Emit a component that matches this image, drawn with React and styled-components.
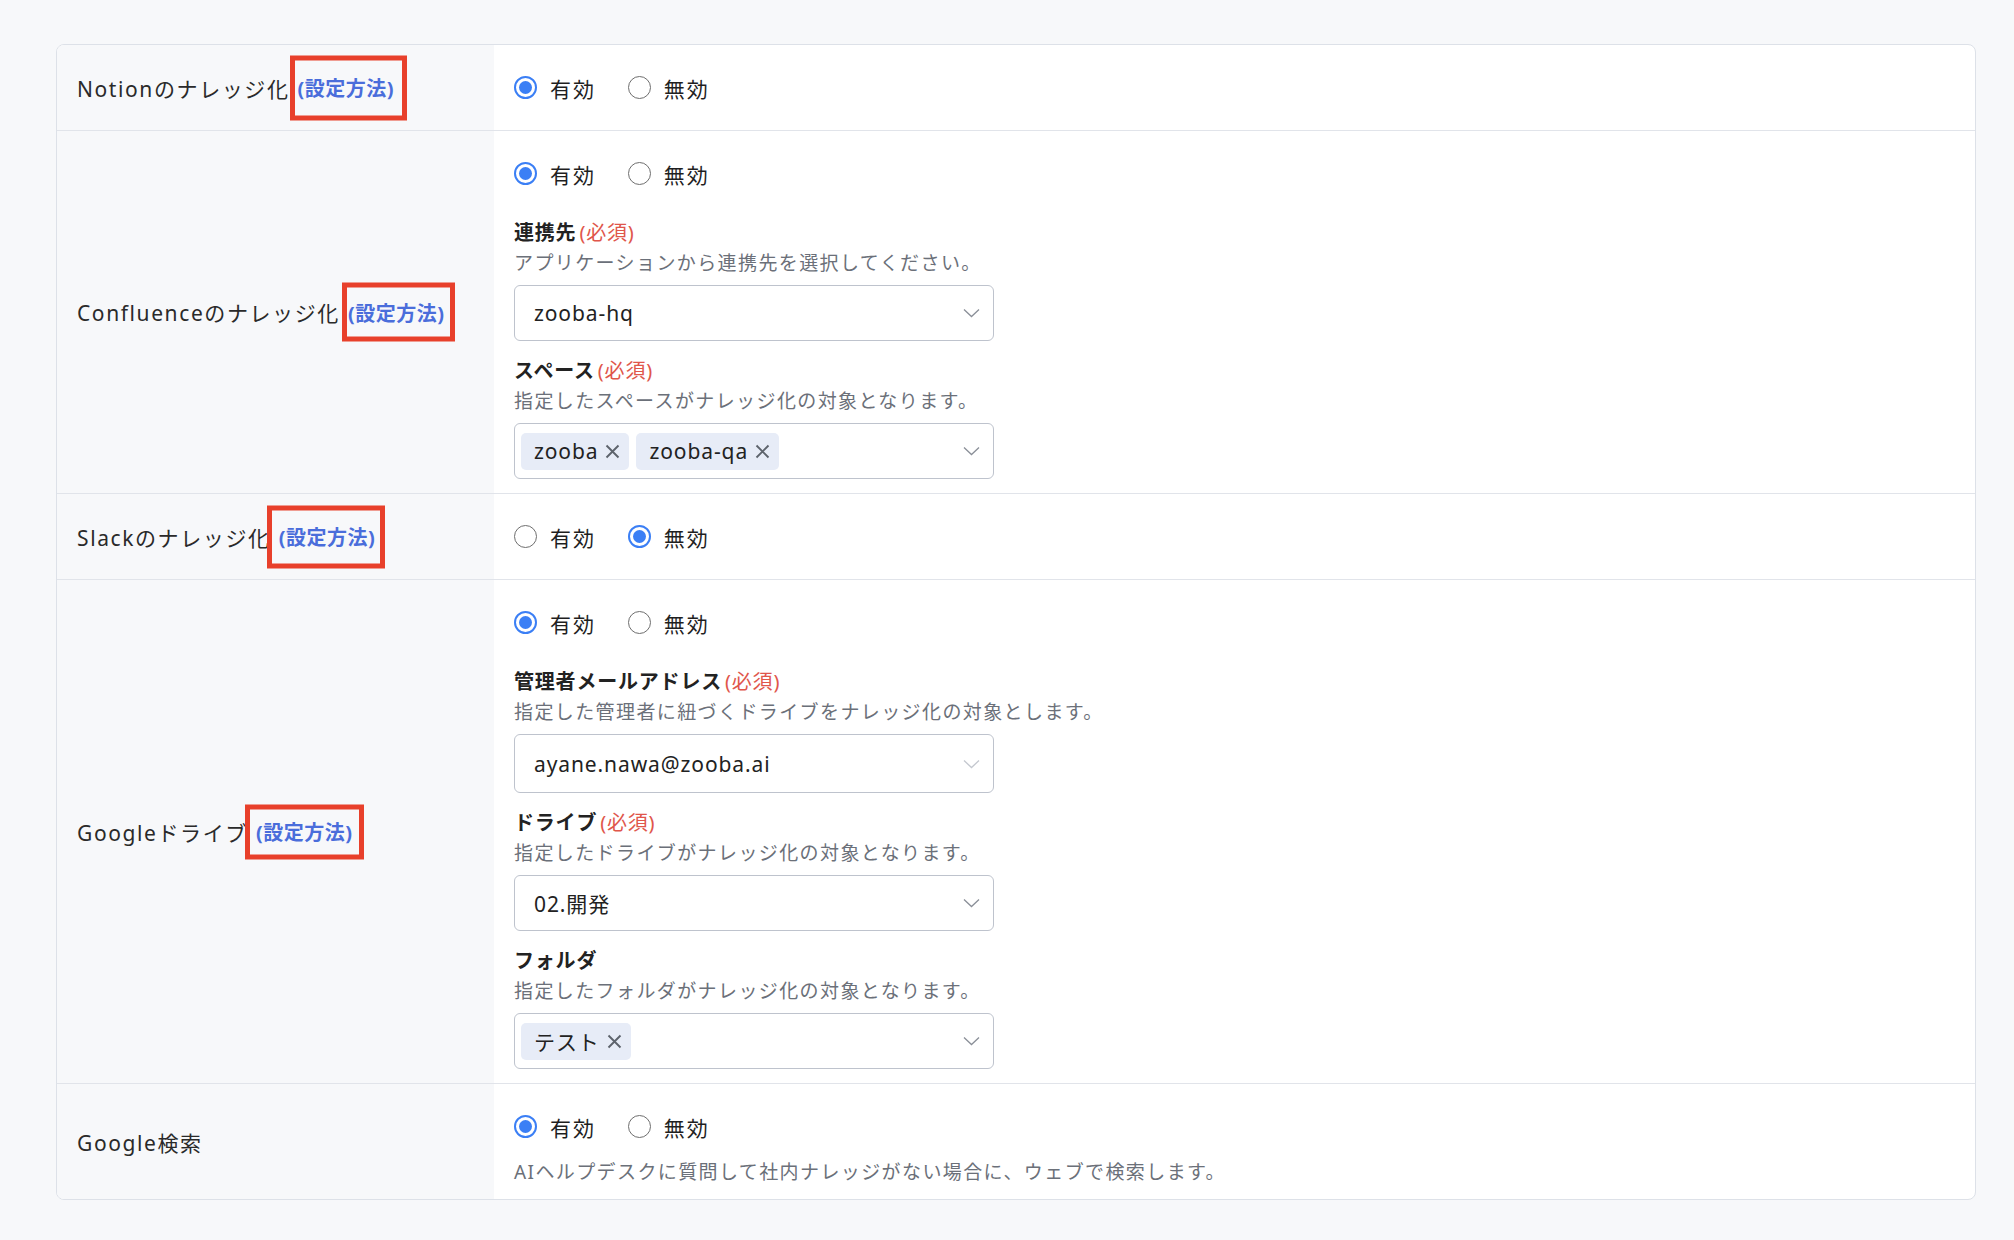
import React from 'react';
import styled, { createGlobalStyle } from 'styled-components';

const GlobalStyle = createGlobalStyle`
  body {
    margin: 0;
    background: #f7f8fa;
    font-family: "Noto Sans", "Noto Sans CJK JP", sans-serif;
    color: #262626;
  }
`;

const Page = styled.div`
  padding: 44px 40px 40px 56px;
`;

const Card = styled.div`
  width: 1918px;
  background: #fff;
  border: 1px solid #dde1e8;
  border-radius: 8px;
  overflow: hidden;
`;

const Row = styled.div`
  display: grid;
  grid-template-columns: 437px 1fr;
  & + & {
    border-top: 1px solid #e1e4ea;
  }
`;

const LabelCell = styled.div`
  background: #f7f8fa;
  padding: 0 20px;
  display: flex;
  align-items: center;
  font-size: 21px;
  letter-spacing: 1.6px;
  color: #2a2a2a;
  white-space: nowrap;
`;

const HowTo = styled.a`
  position: relative;
  margin-left: 8px;
  font-weight: 700;
  font-size: 20px;
  letter-spacing: 0.5px;
  color: #4a6ddb;
  text-decoration: none;

  &::after {
    content: '';
    position: absolute;
    left: ${({ $l }) => $l}px;
    right: ${({ $r }) => $r}px;
    top: 50%;
    height: ${({ $h }) => $h}px;
    transform: translateY(-50%);
    border: 5px solid #e8402b;
  }
`;

const ValueCell = styled.div`
  padding: 20px 20px ${({ $pb }) => $pb}px 20px;
`;

const RadioGroup = styled.div`
  display: flex;
  align-items: center;
  gap: 32px;
  height: 45px;
`;

const RadioItem = styled.label`
  display: flex;
  align-items: center;
  gap: 13px;
  font-size: 21px;
  letter-spacing: 1.9px;
  color: #1f1f1f;
`;

const RadioDot = styled.span`
  box-sizing: border-box;
  width: 23px;
  height: 23px;
  border-radius: 50%;
  border: ${({ $on }) => ($on ? '2px solid #3b7ff5' : '1.8px solid #6e6e6e')};
  display: flex;
  align-items: center;
  justify-content: center;

  &::after {
    content: '';
    display: ${({ $on }) => ($on ? 'block' : 'none')};
    width: 13px;
    height: 13px;
    border-radius: 50%;
    background: #3b7ff5;
  }
`;

const Field = styled.div`
  margin-top: ${({ $first }) => ($first ? 22 : 15)}px;
`;

const FieldLabel = styled.div`
  font-size: 20px;
  line-height: 30px;
  font-weight: 700;
  letter-spacing: 0.8px;
  color: #222;
`;

const Required = styled.span`
  font-weight: 400;
  color: #e0564b;
  margin-left: 3px;
`;

const Hint = styled.div`
  font-size: 19px;
  line-height: 30px;
  letter-spacing: 1.4px;
  color: #6b7079;
  margin-top: ${({ $mt }) => $mt || 0}px;
`;

const SelectBox = styled.div`
  box-sizing: border-box;
  margin-top: 7px;
  width: 480px;
  height: ${({ $tall }) => ($tall ? 59 : 56)}px;
  border: 1px solid #bec3cd;
  border-radius: 6px;
  display: flex;
  align-items: center;
  padding: 0 13px 0 ${({ $multi }) => ($multi ? 6 : 19)}px;
  font-size: 21px;
  letter-spacing: 0.9px;
  color: #222;
`;

const Values = styled.div`
  flex: 1;
  display: flex;
  align-items: center;
  gap: 7px;
`;

const Tag = styled.span`
  display: flex;
  align-items: center;
  gap: 6px;
  height: 37px;
  padding: 0 8px 0 13px;
  background: #e7ecf7;
  border-radius: 5px;
  font-size: 21px;
  letter-spacing: 0.9px;
  color: #222;
`;

const Chevron = ({ light }) => (
  <svg width="17" height="10" viewBox="0 0 17 10" fill="none">
    <path d="M1 1.5l7.5 7 7.5-7" stroke={light ? '#c4c8cf' : '#8a8f98'} strokeWidth="1.3" />
  </svg>
);

const Cross = () => (
  <svg width="17" height="17" viewBox="0 0 17 17">
    <path d="M2.5 2.5l12 12M14.5 2.5l-12 12" stroke="#5d636c" strokeWidth="1.9" />
  </svg>
);

function Radios({ on }) {
  return (
    <RadioGroup>
      <RadioItem>
        <RadioDot $on={on} />
        有効
      </RadioItem>
      <RadioItem>
        <RadioDot $on={!on} />
        無効
      </RadioItem>
    </RadioGroup>
  );
}

function Select({ value, tags, light }) {
  return (
    <SelectBox $multi={!!tags} $tall={light}>
      <Values>
        {tags
          ? tags.map((t) => (
              <Tag key={t}>
                {t}
                <Cross />
              </Tag>
            ))
          : value}
      </Values>
      <Chevron light={light} />
    </SelectBox>
  );
}

function FormField({ label, required, hint, first, children }) {
  return (
    <Field $first={first}>
      <FieldLabel>
        {label}
        {required && <Required>(必須)</Required>}
      </FieldLabel>
      <Hint>{hint}</Hint>
      {children}
    </Field>
  );
}

export default function App() {
  return (
    <Page>
      <GlobalStyle />
      <Card>
        <Row>
          <LabelCell>
            Notionのナレッジ化
            <HowTo $l={-8} $r={-13} $h={55}>(設定方法)</HowTo>
          </LabelCell>
          <ValueCell $pb={20}>
            <Radios on />
          </ValueCell>
        </Row>

        <Row>
          <LabelCell>
            Confluenceのナレッジ化
            <HowTo $l={-6} $r={-11} $h={49}>(設定方法)</HowTo>
          </LabelCell>
          <ValueCell $pb={14}>
            <Radios on />
            <FormField first label="連携先" required hint="アプリケーションから連携先を選択してください。">
              <Select value="zooba-hq" />
            </FormField>
            <FormField label="スペース" required hint="指定したスペースがナレッジ化の対象となります。">
              <Select tags={['zooba', 'zooba-qa']} />
            </FormField>
          </ValueCell>
        </Row>

        <Row>
          <LabelCell>
            Slackのナレッジ化
            <HowTo $l={-12} $r={-10} $h={53}>(設定方法)</HowTo>
          </LabelCell>
          <ValueCell $pb={20}>
            <Radios on={false} />
          </ValueCell>
        </Row>

        <Row>
          <LabelCell>
            Googleドライブ
            <HowTo $l={-11} $r={-12} $h={45}>(設定方法)</HowTo>
          </LabelCell>
          <ValueCell $pb={14}>
            <Radios on />
            <FormField first label="管理者メールアドレス" required hint="指定した管理者に紐づくドライブをナレッジ化の対象とします。">
              <Select value="ayane.nawa@zooba.ai" light />
            </FormField>
            <FormField label="ドライブ" required hint="指定したドライブがナレッジ化の対象となります。">
              <Select value="02.開発" />
            </FormField>
            <FormField label="フォルダ" hint="指定したフォルダがナレッジ化の対象となります。">
              <Select tags={['テスト']} />
            </FormField>
          </ValueCell>
        </Row>

        <Row>
          <LabelCell>Google検索</LabelCell>
          <ValueCell $pb={12}>
            <Radios on />
            <Hint $mt={8}>AIヘルプデスクに質問して社内ナレッジがない場合に、ウェブで検索します。</Hint>
          </ValueCell>
        </Row>
      </Card>
    </Page>
  );
}
